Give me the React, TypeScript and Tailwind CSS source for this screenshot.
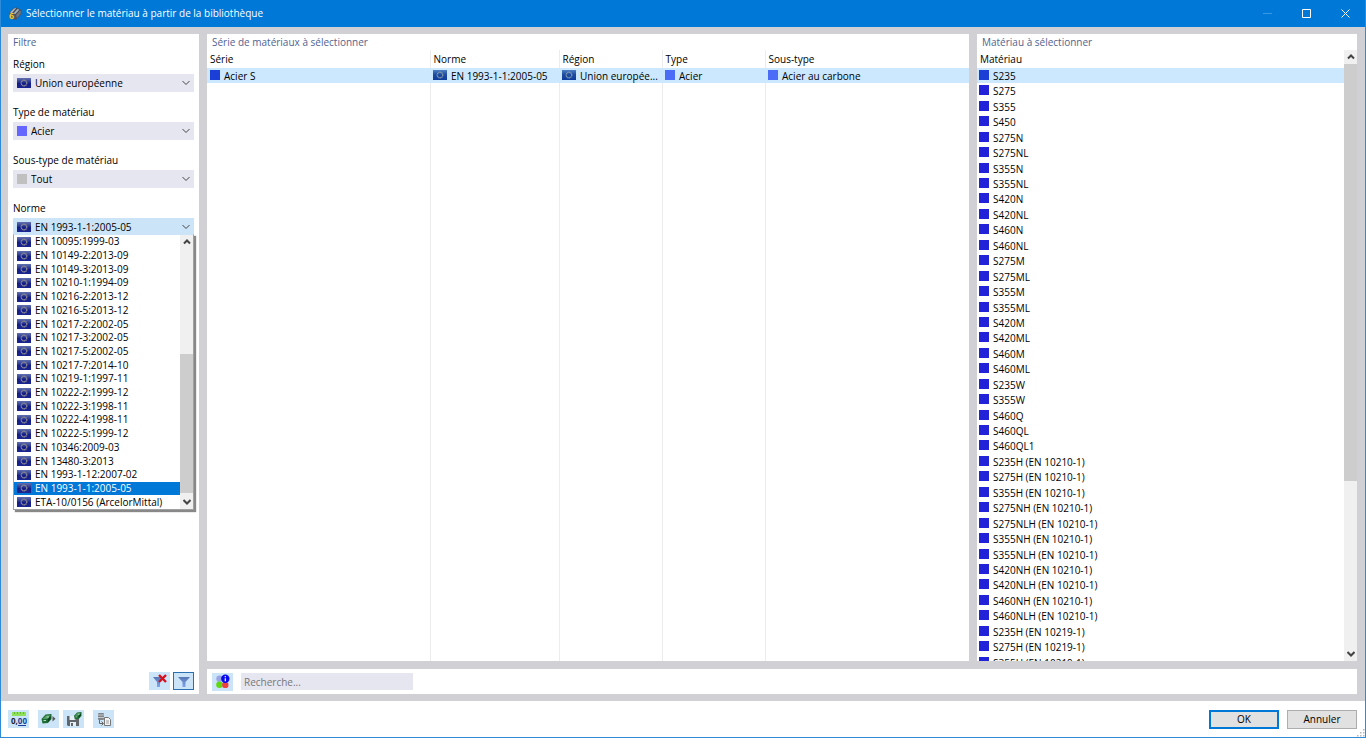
import type { ReactNode } from "react";
import clsx from "clsx";

const norms = [
  "EN 10095:1999-03",
  "EN 10149-2:2013-09",
  "EN 10149-3:2013-09",
  "EN 10210-1:1994-09",
  "EN 10216-2:2013-12",
  "EN 10216-5:2013-12",
  "EN 10217-2:2002-05",
  "EN 10217-3:2002-05",
  "EN 10217-5:2002-05",
  "EN 10217-7:2014-10",
  "EN 10219-1:1997-11",
  "EN 10222-2:1999-12",
  "EN 10222-3:1998-11",
  "EN 10222-4:1998-11",
  "EN 10222-5:1999-12",
  "EN 10346:2009-03",
  "EN 13480-3:2013",
  "EN 1993-1-12:2007-02",
  "EN 1993-1-1:2005-05",
  "ETA-10/0156 (ArcelorMittal)",
];

const materials = [
  "S235", "S275", "S355", "S450", "S275N", "S275NL", "S355N", "S355NL",
  "S420N", "S420NL", "S460N", "S460NL", "S275M", "S275ML", "S355M", "S355ML",
  "S420M", "S420ML", "S460M", "S460ML", "S235W", "S355W", "S460Q", "S460QL",
  "S460QL1", "S235H (EN 10210-1)", "S275H (EN 10210-1)", "S355H (EN 10210-1)",
  "S275NH (EN 10210-1)", "S275NLH (EN 10210-1)", "S355NH (EN 10210-1)",
  "S355NLH (EN 10210-1)", "S420NH (EN 10210-1)", "S420NLH (EN 10210-1)",
  "S460NH (EN 10210-1)", "S460NLH (EN 10210-1)", "S235H (EN 10219-1)",
  "S275H (EN 10219-1)", "S355H (EN 10219-1)",
];

function Flag({ tinted }: { tinted?: boolean }) {
  return (
    <svg width="14" height="10" viewBox="0 0 14 10" className="shrink-0" aria-hidden="true">
      <defs>
        <linearGradient id="flag" x1="0" y1="0" x2="0" y2="1">
          <stop offset="0" stopColor="#6170b0" />
          <stop offset="0.4" stopColor="#2c3a92" />
          <stop offset="0.55" stopColor="#141e88" />
          <stop offset="1" stopColor="#1c2690" />
        </linearGradient>
        <linearGradient id="flag-tinted" x1="0" y1="0" x2="0" y2="1">
          <stop offset="0" stopColor="#4f7fc4" />
          <stop offset="0.45" stopColor="#1f4ca0" />
          <stop offset="1" stopColor="#0f3c9c" />
        </linearGradient>
      </defs>
      <rect width="14" height="10" fill={tinted ? "url(#flag-tinted)" : "url(#flag)"} />
      <circle
        cx="7"
        cy="5"
        r="2.800"
        fill="none"
        stroke={tinted ? "#7d98a8" : "#8d8c92"}
        strokeWidth="1.300"
        strokeDasharray="1.300 0.300"
      />
    </svg>
  );
}

function Swatch({ className }: { className: string }) {
  return <span className={clsx("size-[10px] shrink-0", className)} />;
}

function Chevron({ up, className }: { up?: boolean; className?: string }) {
  return (
    <svg width="8" height="6" viewBox="0 0 8 6" fill="none" stroke="currentColor" className={className} aria-hidden="true">
      <path d={up ? "M1 4.5 4 1.5 7 4.5" : "M0.5 1 4 4.5 7.5 1"} />
    </svg>
  );
}

type FilterProps = {
  id: string;
  label: string;
  value: string;
  flag?: boolean;
  icon: ReactNode;
  open?: boolean;
  children?: ReactNode;
};

function Filter({ id, label, value, icon, flag, open, children }: FilterProps) {
  return (
    <div className="mb-[11px]">
      <label htmlFor={id} className="block h-[19px] leading-[19px]">
        {label}
      </label>
      <div className="relative">
        <select
          id={id}
          defaultValue={value}
          className={clsx(
            "block h-[18px] w-full appearance-none pr-4 outline-none",
            flag ? "pl-[22px]" : "pl-[18px]",
            open ? "bg-[#cce4f7]" : "bg-[#e6e6f1]"
          )}
        >
          <option>{value}</option>
        </select>
        <span className="pointer-events-none absolute inset-y-0 left-1 flex items-center">{icon}</span>
        <Chevron className="pointer-events-none absolute top-[6px] right-1 text-[#444]" />
        {children}
      </div>
    </div>
  );
}

function ScrollBar({ before, thumb, after }: { before: string; thumb: string; after: string }) {
  return (
    <div className="flex w-[13px] shrink-0 flex-col bg-[#f0f0f0] text-[#444]">
      <button aria-label="Défiler vers le haut" className="flex h-[14px] items-center justify-center">
        <Chevron up className="stroke-2" />
      </button>
      <div className={before} />
      <div className={clsx("bg-[#cdcdcd]", thumb)} />
      <div className={after} />
      <button aria-label="Défiler vers le bas" className="flex h-[14px] items-center justify-center">
        <Chevron className="stroke-2" />
      </button>
    </div>
  );
}

function ToolButton({ label, className, children }: { label: string; className?: string; children: ReactNode }) {
  return (
    <button
      aria-label={label}
      className={clsx("flex h-[18px] w-[21px] shrink-0 items-center justify-center bg-[#cce4f7]", className)}
    >
      {children}
    </button>
  );
}

function PanelTitle({ children }: { children: ReactNode }) {
  return <h2 className="h-4 shrink-0 px-[5px] font-medium leading-4 text-[#52628f]">{children}</h2>;
}

function AppIcon() {
  return (
    <svg width="14" height="14" viewBox="0 0 14 14" aria-hidden="true">
      <path d="M1 6 5.500 1l3-.5L13.500 3 13 7.500 8 13 5 12.500 1 8z" fill="#4b5560" />
      <path d="M2 5.500 6 1.500 8.500 1 4 6.500zM5.500 6.500 9.500 2l2 .8L7.500 7z" fill="#aab4bf" />
      <path d="m8 8 4-4.500 1 .5-.5 3L9 11z" fill="#6b7682" />
      <path d="m4.500 6 4.500-5M7.500 7.500l4.500-5" stroke="#39424c" strokeWidth="0.700" />
      <text x="1" y="12" fontSize="9" fontWeight="700" fill="#f7c52c" fontFamily="Open Sans">
        6
      </text>
    </svg>
  );
}

function FunnelIcon({ crossed }: { crossed?: boolean }) {
  return (
    <svg width="16" height="14" viewBox="0 0 16 14" aria-hidden="true">
      <defs>
        <linearGradient id="funnel" x1="0" y1="0" x2="0" y2="1">
          <stop offset="0" stopColor="#5878b4" />
          <stop offset="1" stopColor="#7fa5ee" />
        </linearGradient>
      </defs>
      <path d={crossed ? "M1 3h11L8 8v5H5V8z" : "M2 3h12L9.500 8v5h-3V8z"} fill="url(#funnel)" />
      {crossed && <path d="m7 1 7 7M14 1 7 8" stroke="#d8101c" strokeWidth="2.400" />}
    </svg>
  );
}

function InfoIcon() {
  return (
    <svg width="15" height="15" viewBox="0 0 15 15" aria-hidden="true">
      <circle cx="4.500" cy="4.700" r="3.200" fill="#9aa6e4" />
      <circle cx="4.500" cy="10.700" r="3.300" fill="#5fd80f" />
      <circle cx="10.300" cy="10.900" r="3.200" fill="#ea4040" />
      <circle cx="10.300" cy="4.700" r="4.200" fill="#0a0aee" />
      <path d="M10.300 2v1.300M10.300 4.200v3" stroke="#fff" strokeWidth="1.200" />
    </svg>
  );
}

function UnitsIcon() {
  return (
    <svg width="17" height="16" viewBox="0 0 17 16" aria-hidden="true">
      <rect x="2" y="1" width="14" height="4" fill="#8ee05a" />
      <path d="M4.500 1v2M7.500 1v2M10.500 1v2M13.500 1v2" stroke="#5cae31" strokeWidth="0.800" />
      <text x="1" y="13" fontSize="8" fontWeight="700" fontFamily="Open Sans" fill="#222">
        0,
        <tspan fill="#1a3f9e">00</tspan>
      </text>
      <path d="M8 14.500h8" stroke="#1a3f9e" />
    </svg>
  );
}

function Beam() {
  return (
    <>
      <path d="M0 5 4 .5 10 0v5L6.500 9 1 9.500z" fill="#1d6b35" />
      <path d="m1 5 3.500-3.500L9 1 6 5z" fill="#4f9a63" />
      <path d="M6 5 9 2v3L6.500 8z" fill="#0e4420" />
      <path d="M2 6.500h2.500M5 3h2.500" stroke="#b5dcc0" />
    </>
  );
}

function ImportIcon() {
  return (
    <svg width="15" height="12" viewBox="0 0 15 12" aria-hidden="true">
      <g transform="translate(0.500 1)">
        <Beam />
      </g>
      <path d="m11.500 3 3 2.700-3 2.800z" fill="#555" />
    </svg>
  );
}

function SaveIcon() {
  return (
    <svg width="16" height="15" viewBox="0 0 16 15" aria-hidden="true">
      <path d="M1 4h11l1 1v9H2l-1-1z" fill="#60666b" />
      <rect x="3.500" y="4" width="6" height="4" fill="#e4eef6" />
      <rect x="4" y="10" width="6" height="4" fill="#e4eef6" />
      <rect x="5" y="11" width="2" height="3" fill="#60666b" />
      <g transform="translate(8 0) scale(0.75)">
        <Beam />
      </g>
    </svg>
  );
}

function CopyIcon() {
  return (
    <svg width="16" height="15" viewBox="0 0 16 15" fill="none" aria-hidden="true">
      <rect x="2" y="1" width="6" height="7" rx="1" fill="#808488" />
      <path d="M2 3h6M2 5.500h6" stroke="#d5dde4" strokeWidth="0.800" />
      <path d="M3.500 8v3.500H7M5.500 9.500l2 2-2 2" stroke="#666" />
      <path d="M8.500 5.500h4l2 2v6h-6z" fill="#f4f4f4" stroke="#777" />
      <path d="M10 9h3M10 11h3" stroke="#888" strokeWidth="0.800" />
    </svg>
  );
}

function TitleBar() {
  return (
    <header className="flex h-[27px] shrink-0 items-center bg-[#0078d7] pl-[7px] text-white">
      <AppIcon />
      <h1 className="ml-[4px] flex-1">Sélectionner le matériau à partir de la bibliothèque</h1>
      <button aria-label="Réduire" disabled className="flex w-[39px] justify-center text-[#3a97e2]">
        <svg width="9" height="9" viewBox="0 0 9 9" stroke="currentColor">
          <path d="M0 4.500h9" />
        </svg>
      </button>
      <button aria-label="Agrandir" className="flex w-[39px] justify-center">
        <svg width="9" height="9" viewBox="0 0 9 9" fill="none" stroke="currentColor">
          <path d="M0.500 0.500h8v8h-8z" />
        </svg>
      </button>
      <button aria-label="Fermer" className="flex w-[39px] justify-center">
        <svg width="9" height="9" viewBox="0 0 9 9" stroke="currentColor">
          <path d="m0.500 0.500 8 8M8.500 0.500l-8 8" />
        </svg>
      </button>
    </header>
  );
}

function NormList() {
  return (
    <div className="absolute top-4 right-0 left-0 z-10 flex border border-[#a0a0a0] border-t-[#cce4f7] bg-white shadow-[2px_2px_1px_#888]">
      <ul role="listbox" aria-label="Norme" className="grid h-[274px] min-w-0 flex-1 auto-rows-fr">
        {norms.map((norm) => {
          const selected = norm === "EN 1993-1-1:2005-05";
          return (
            <li
              key={norm}
              role="option"
              aria-selected={selected}
              className={clsx(
                "flex min-h-0 items-center gap-1 pl-[3px] leading-[13px] whitespace-nowrap",
                selected && "bg-[#0078d7] text-white"
              )}
            >
              <Flag />
              {norm}
            </li>
          );
        })}
      </ul>
      <ScrollBar before="h-[105px]" thumb="flex-1" after="h-[2px]" />
    </div>
  );
}

function FilterPanel() {
  return (
    <aside className="flex w-[191px] shrink-0 flex-col bg-white">
      <PanelTitle>Filtre</PanelTitle>
      <div className="flex-1 px-[5px] pt-[5px]">
        <Filter id="region" label="Région" value="Union européenne" flag icon={<Flag />} />
        <Filter id="type" label="Type de matériau" value="Acier" icon={<Swatch className="bg-[#6565ff]" />} />
        <Filter id="subtype" label="Sous-type de matériau" value="Tout" icon={<Swatch className="bg-[#c0c0c0]" />} />
        <Filter id="norm" label="Norme" value="EN 1993-1-1:2005-05" flag icon={<Flag />} open>
          <NormList />
        </Filter>
      </div>
      <div className="flex justify-end gap-[3px] pr-[5px] pb-1">
        <ToolButton label="Supprimer le filtre">
          <FunnelIcon crossed />
        </ToolButton>
        <ToolButton label="Filtrer" className="border border-[#2a6fae]">
          <FunnelIcon />
        </ToolButton>
      </div>
    </aside>
  );
}

const cells = [
  { text: "Acier S", icon: <Swatch className="bg-[#1b3fd6]" /> },
  { text: "EN 1993-1-1:2005-05", icon: <Flag tinted /> },
  { text: "Union europée...", icon: <Flag tinted /> },
  { text: "Acier", icon: <Swatch className="bg-[#4a6cf7]" /> },
  { text: "Acier au carbone", icon: <Swatch className="bg-[#4a6cf7]" /> },
];

function SeriesPanel() {
  return (
    <section className="flex min-w-0 flex-1 flex-col bg-white">
      <PanelTitle>Série de matériaux à sélectionner</PanelTitle>
      <div className="flex min-h-0 flex-1">
        <table className="h-full w-full table-fixed border-collapse text-left">
          <colgroup>
            <col className="w-[223px]" />
            <col className="w-[129px]" />
            <col className="w-[103px]" />
            <col className="w-[103px]" />
            <col />
          </colgroup>
          <thead>
            <tr className="h-[18px]">
              {["Série", "Norme", "Région", "Type", "Sous-type"].map((name) => (
                <th key={name} className="border-r border-[#ececec] p-0 pl-[3px] font-normal last:border-r-0">
                  {name}
                </th>
              ))}
            </tr>
          </thead>
          <tbody>
            <tr className="h-[15px] bg-[#cce8ff]">
              {cells.map((cell) => (
                <td key={cell.text} className="p-0 pl-[3px]">
                  <span className="flex h-[15px] items-start gap-1 pt-[2px] leading-[12px] whitespace-nowrap">
                    {cell.icon}
                    {cell.text}
                  </span>
                </td>
              ))}
            </tr>
            <tr>
              {cells.map((cell) => (
                <td key={cell.text} className="border-r border-[#ececec] last:border-r-0" />
              ))}
            </tr>
          </tbody>
        </table>
      </div>
    </section>
  );
}

function MaterialPanel() {
  return (
    <section className="flex w-[380px] shrink-0 flex-col bg-white">
      <PanelTitle>Matériau à sélectionner</PanelTitle>
      <div className="flex min-h-0 flex-1">
        <div className="flex min-w-0 flex-1 flex-col overflow-hidden">
          <h3 className="h-[18px] shrink-0 pl-[3px] leading-[18px]">Matériau</h3>
          <ul className="grid h-[602px] shrink-0 auto-rows-fr">
            {materials.map((name, i) => (
              <li
                key={name}
                className={clsx("flex min-h-0 items-start gap-1 pt-[2px] pl-[2px] leading-[12px]", i === 0 && "bg-[#cce8ff]")}
              >
                <Swatch className={i === 0 ? "bg-[#1b3fd6]" : "bg-[#2222d8]"} />
                {name}
              </li>
            ))}
          </ul>
        </div>
        <ScrollBar before="h-0" thumb="basis-[417px]" after="flex-1" />
      </div>
    </section>
  );
}

export default function App() {
  return (
    <div className="flex h-screen flex-col overflow-hidden border-x border-b border-[#2f8ad8] bg-white font-['Open_Sans','Noto_Sans',sans-serif] text-[10px] text-black">
      <TitleBar />
      <main className="flex min-h-0 flex-1 gap-2 bg-[#d1d0d5] py-[7px] pr-2 pl-[7px]">
        <FilterPanel />
        <div className="flex min-w-0 flex-1 flex-col gap-2">
          <div className="flex min-h-0 flex-1 gap-2">
            <SeriesPanel />
            <MaterialPanel />
          </div>
          <div className="flex h-[25px] shrink-0 items-center gap-2 bg-white pl-[5px]">
            <ToolButton label="Informations">
              <InfoIcon />
            </ToolButton>
            <input
              type="search"
              aria-label="Recherche"
              placeholder="Recherche..."
              className="h-[17px] w-[172px] bg-[#e6e6f1] px-[3px] outline-none placeholder:text-[#777]"
            />
          </div>
        </div>
      </main>
      <footer className="relative flex h-9 shrink-0 items-center pr-2 pl-[7px]">
        <ToolButton label="Unités et décimales">
          <UnitsIcon />
        </ToolButton>
        <ToolButton label="Importer" className="ml-[9px]">
          <ImportIcon />
        </ToolButton>
        <ToolButton label="Enregistrer" className="ml-[4px]">
          <SaveIcon />
        </ToolButton>
        <ToolButton label="Copier" className="ml-[9px]">
          <CopyIcon />
        </ToolButton>
        <div className="ml-auto flex gap-2">
          <button className="h-[19px] w-[70px] border-2 border-[#0078d7] bg-[#e1e1e1] font-medium leading-[14px]">OK</button>
          <button className="h-[19px] w-[70px] border border-[#adadad] bg-[#e1e1e1] font-medium leading-[16px]">Annuler</button>
        </div>
        <svg width="8" height="8" viewBox="0 0 8 8" fill="#b8b8b8" className="absolute right-0 bottom-0" aria-hidden="true">
          <path d="M6 0h1.500v1.500H6zM3 3h1.500v1.500H3zM6 3h1.500v1.500H6zM0 6h1.500v1.500H0zM3 6h1.500v1.500H3zM6 6h1.500v1.500H6z" />
        </svg>
      </footer>
    </div>
  );
}
